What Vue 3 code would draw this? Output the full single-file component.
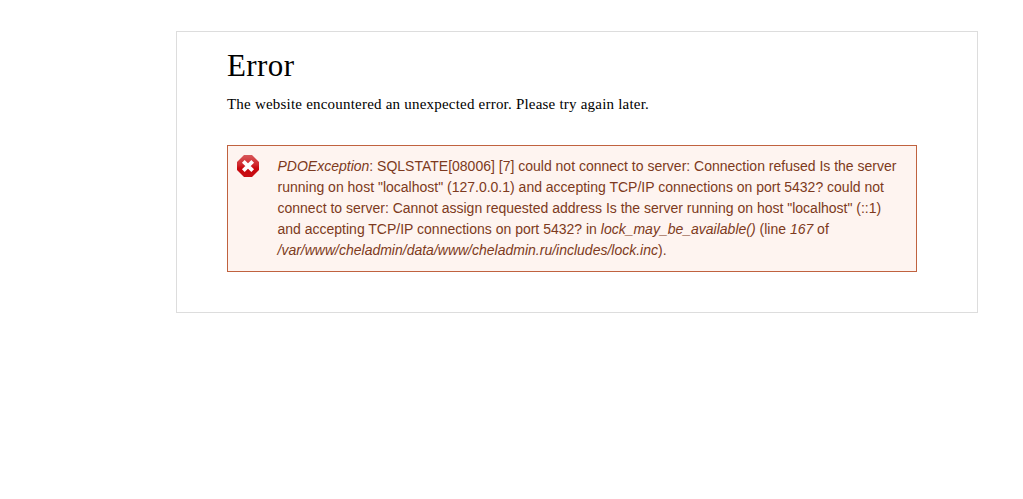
<template>
    <div class="page">
        <main class="content">
            <h1 class="title">Error</h1>
            <p class="intro">The website encountered an unexpected error. Please try again later.</p>
            <div class="messages">
                <svg class="icon" viewBox="0 0 24 24">
                    <defs>
                        <linearGradient id="iconFill" x1="0" y1="0" x2="0" y2="1">
                            <stop offset="0" stop-color="#d8585a" />
                            <stop offset="0.45" stop-color="#d0282d" />
                            <stop offset="0.6" stop-color="#c8080e" />
                            <stop offset="1" stop-color="#c80e14" />
                        </linearGradient>
                    </defs>
                    <path d="M7 1h8l7 7v8l-7 7H7l-7-7V8z" fill="url(#iconFill)" />
                    <path d="M6.3 7.3l9.4 9.4M15.7 7.3l-9.4 9.4" stroke="#fff" stroke-width="3.8" />
                </svg>
                <div class="text">
                    <div v-for="(line, i) in lines" :key="i" class="line">
                        <component :is="part.em ? 'em' : 'span'" v-for="(part, j) in line" :key="j">{{ part.text }}</component>
                    </div>
                </div>
            </div>
        </main>
    </div>
</template>

<script setup>
const lines = [
    [{ text: 'PDOException', em: true }, { text: ': SQLSTATE[08006] [7] could not connect to server: Connection refused Is the server' }],
    [{ text: 'running on host "localhost" (127.0.0.1) and accepting TCP/IP connections on port 5432? could not' }],
    [{ text: 'connect to server: Cannot assign requested address Is the server running on host "localhost" (::1)' }],
    [{ text: 'and accepting TCP/IP connections on port 5432? in ' }, { text: 'lock_may_be_available()', em: true }, { text: ' (line ' }, { text: '167', em: true }, { text: ' of' }],
    [{ text: '/var/www/cheladmin/data/www/cheladmin.ru/includes/lock.inc', em: true }, { text: ').' }]
];
</script>

<style>
body {
    margin: 0;
    background: #fff;
}
</style>

<style scoped>
.page {
    box-sizing: border-box;
    padding: 31px 45px 0 176px;
    font-family: Georgia, "Liberation Serif", serif;
    color: #000;
}

.content {
    box-sizing: border-box;
    width: 802px;
    height: 282px;
    padding: 17px 60px 0 50px;
    border: 1px solid #ddd;
}

.title {
    margin: 0;
    font-size: 31px;
    font-weight: normal;
    line-height: 34px;
    letter-spacing: 0.4px;
}

.intro {
    margin: 11px 0 30px;
    font-size: 15px;
    line-height: 21px;
    letter-spacing: 0.21px;
    white-space: nowrap;
}

.messages {
    display: flex;
    box-sizing: border-box;
    height: 127px;
    padding: 8px 9px;
    border: 1px solid #c0623f;
    background: #fef4f0;
    color: #7d3a20;
    font-family: "Liberation Sans", Arial, sans-serif;
    font-size: 14px;
    line-height: 21px;
}

.icon {
    flex: none;
    width: 24px;
    height: 24px;
    margin-right: 16.5px;
}

.text {
    padding-top: 2px;
    white-space: pre;
}

.line {
    height: 21px;
}
</style>
